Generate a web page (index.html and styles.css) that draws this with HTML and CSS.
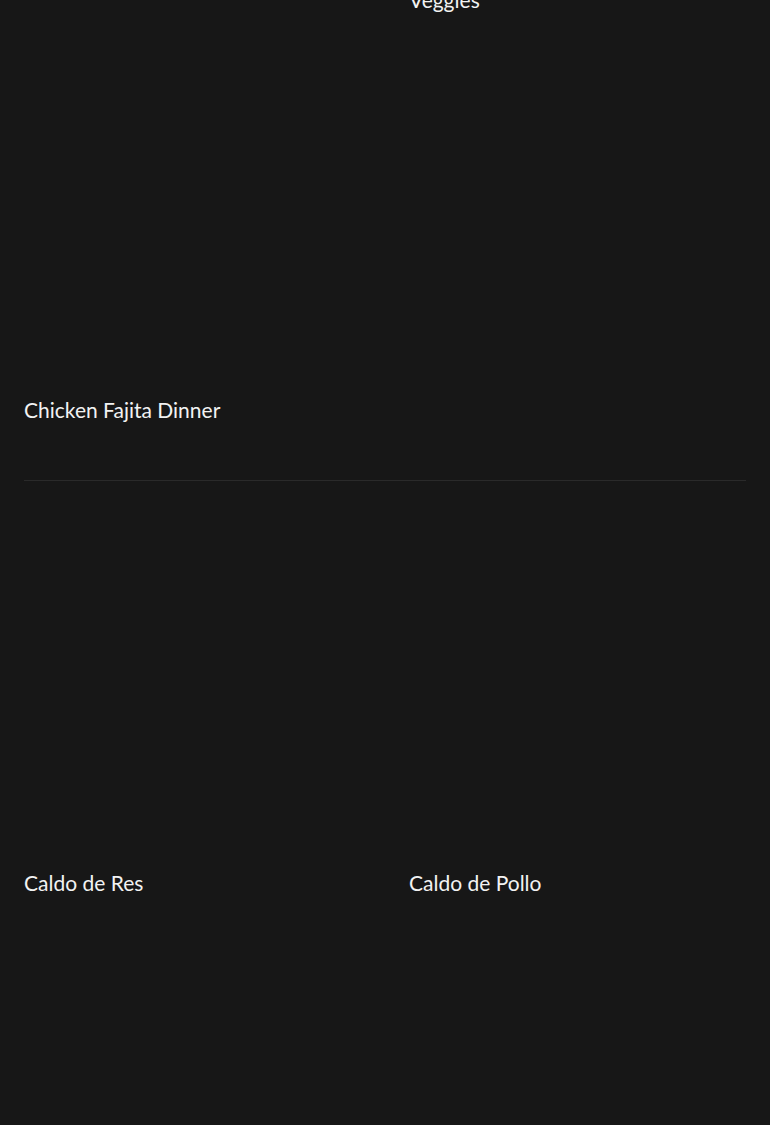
FILE: index.html
```html
<!DOCTYPE html>
<html lang="en">
<head>
<meta charset="utf-8">
<title>Recipes</title>
<link rel="stylesheet" href="styles.css">
</head>
<body>
<main class="page">
  <section class="section section-first">
    <div class="grid">
      <article class="card">
        <div class="thumb"></div>
        <h3 class="title">Chicken Tinga Tacos</h3>
      </article>
      <article class="card">
        <div class="thumb"></div>
        <h3 class="title">Sheet Pan Chicken and<br>Veggies</h3>
      </article>
      <article class="card">
        <div class="thumb"></div>
        <h3 class="title">Chicken Fajita Dinner</h3>
      </article>
    </div>
  </section>
  <section class="section">
    <div class="grid">
      <article class="card">
        <div class="thumb"></div>
        <h3 class="title">Caldo de Res</h3>
      </article>
      <article class="card">
        <div class="thumb"></div>
        <h3 class="title">Caldo de Pollo</h3>
      </article>
      <article class="card">
        <div class="thumb"></div>
        <h3 class="title">Sopa de Fideo</h3>
      </article>
      <article class="card">
        <div class="thumb"></div>
        <h3 class="title">Pozole Rojo</h3>
      </article>
    </div>
  </section>
</main>
</body>
</html>
```
FILE: styles.css
```css
html, body {
  margin: 0;
  padding: 0;
  background: #171717;
}
body {
  font-family: "Lato", "Open Sans", sans-serif;
  color: #f2f2f2;
}
.page {
  padding: 0 24px;
}
.section {
  padding: 39px 0 56px;
  border-bottom: 1px solid #2a2a2a;
}
.section-first {
  margin-top: -391px;
  padding-top: 0;
}
.grid {
  display: grid;
  grid-template-columns: 1fr 1fr;
  column-gap: 48px;
  row-gap: 33px;
  align-items: start;
}
.thumb {
  aspect-ratio: 1 / 1;
  background: #171717;
}
.title {
  margin: 12px 0 0;
  font-size: 21px;
  line-height: 28px;
  font-weight: 400;
}
```
